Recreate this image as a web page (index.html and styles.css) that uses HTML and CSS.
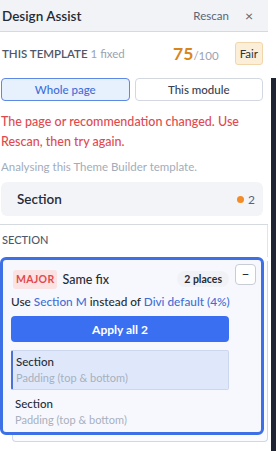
FILE: index.html
```html
<!DOCTYPE html>
<html>
<head>
<meta charset="utf-8">
<link rel="stylesheet" href="styles.css">
</head>
<body>
<div class="frame">
  <div class="panel">
    <header class="header">
      <span class="title">Design Assist</span>
      <span class="header-actions"><span class="rescan">Rescan</span><span class="close">×</span></span>
    </header>
    <div class="score-row">
      <span class="tpl"><span class="tpl-label">THIS TEMPLATE</span> <span class="tpl-fixed">1 fixed</span></span>
      <span class="score"><span class="score-num">75</span><span class="score-max">/100</span></span>
      <span class="fair">Fair</span>
    </div>
    <div class="tabs">
      <button class="tab active">Whole page</button>
      <button class="tab">This module</button>
    </div>
    <p class="error">The page or recommendation changed. Use Rescan, then try again.</p>
    <p class="note">Analysing this Theme Builder template.</p>
    <div class="section-card">
      <span class="section-name">Section</span>
      <span class="count"><span class="dot"></span>2</span>
    </div>
    <div class="group">
      <div class="group-label">SECTION</div>
      <div class="issue-wrap">
        <div class="issue">
          <div class="issue-head">
            <span class="major">MAJOR</span>
            <span class="fix">Same fix</span>
            <span class="places">2 places</span>
          </div>
          <button class="collapse">−</button>
          <p class="desc">Use <span class="link">Section M</span> instead of <span class="link">Divi default (4%)</span></p>
          <button class="apply">Apply all 2</button>
          <div class="item selected">
            <div class="item-name">Section</div>
            <div class="item-sub">Padding (top &amp; bottom)</div>
          </div>
          <div class="item">
            <div class="item-name">Section</div>
            <div class="item-sub">Padding (top &amp; bottom)</div>
          </div>
        </div>
      </div>
    </div>
  </div>
  <div class="scroll"></div>
</div>
</body>
</html>
```
FILE: styles.css
```css
* { box-sizing: border-box; }
html, body { margin: 0; padding: 0; background: #fff; }
body { font-family: "Lato", "Noto Sans", sans-serif; color: #2d3340; width: 278px; height: 451px; overflow: hidden; }
.frame { display: flex; height: 451px; }
.panel { width: 268px; flex: none; }
.scroll { width: 5px; margin-left: 3px; margin-top: 78px; background: #1f2432; }

.header { height: 32px; background: #f1f3f7; border-bottom: 1px solid #d5d9e0; display: flex; align-items: center; justify-content: space-between; padding: 0 0 0 2px; }
.title { font-size: 13.5px; font-weight: 600; color: #252b36; }
.header-actions { display: flex; align-items: center; }
.rescan { font-size: 11.5px; color: #5b6474; margin-right: 16px; }
.close { font-size: 14px; color: #5b6474; margin-right: 15px; }

.score-row { display: flex; align-items: center; height: 42px; padding: 0 5px 0 2px; }
.tpl { font-size: 11.5px; flex: 1; }
.tpl-label { font-weight: 600; color: #4f586a; }
.tpl-fixed { color: #9aa3b2; }
.score { margin-right: 16px; }
.score-num { font-size: 17.5px; font-weight: 700; color: #d8861c; }
.score-max { font-size: 11.5px; color: #9aa3b2; }
.fair { font-size: 11.5px; background: #fcefd9; border: 1px solid #f1d6ab; border-radius: 3px; padding: 4px 4px; color: #2d3340; }

.tabs { display: flex; gap: 5px; padding: 0 5px 0 1px; margin-top: 4px; }
.tab { flex: 1; height: 23px; font-family: inherit; font-size: 11.5px; font-weight: 500; border: 1px solid #d3d8e0; background: #fff; border-radius: 4px; color: #3a4150; }
.tab.active { background: #e7f0fd; border-color: #5d88e3; color: #3c6fd9; }

.error { margin: 11px 0 0 1px; font-size: 12.5px; font-weight: 500; line-height: 20px; color: #e04a4f; }
.note { margin: 8px 0 0 1px; font-size: 11.5px; color: #a3acba; }

.section-card { margin: 9px 5px 0 1px; height: 34px; background: #f3f4f7; border-radius: 6px; display: flex; align-items: center; justify-content: space-between; padding: 0 8px 0 16px; }
.section-name { font-size: 13.5px; font-weight: 600; color: #262c38; }
.count { display: flex; align-items: center; font-size: 12px; color: #5b6474; }
.dot { width: 7px; height: 7px; border-radius: 50%; background: #f38b26; margin-right: 4px; }

.group { margin-top: 8px; border-top: 1px solid #d5d9e0; }
.group-label { font-size: 11px; font-weight: 500; color: #4f586a; padding: 8px 0 0 2px; height: 32px; border-right: 1px solid #e1e4ea; }
.issue-wrap { position: relative; padding-right: 4px; }
.issue-wrap::before { content: ""; position: absolute; left: 12px; right: 0; top: 4px; bottom: -7px; border: 1px solid #cfd7ea; border-top: none; border-radius: 0 0 4px 4px; background: #fafbfe; }
.issue { position: relative; border: 3px solid #3d6fe6; border-radius: 6px; background: #f7f8fd; padding: 9px 32px 4px 8px; height: 178px; }
.issue-head { display: flex; align-items: center; height: 20px; }
.major { font-size: 10.5px; font-weight: 700; color: #e2494e; background: #fbe2e3; border-radius: 3px; padding: 3px 3px; letter-spacing: 0.3px; line-height: 13px; margin-left: 2px; }
.fix { font-size: 12.5px; font-weight: 500; margin-left: 5px; color: #262c38; flex: 1; }
.places { font-size: 10.5px; font-weight: 700; background: #f0f2f6; border-radius: 9px; padding: 2px 7px; color: #262c38; }
.collapse { position: absolute; right: 5px; top: 4px; width: 21px; height: 21px; padding: 0; border: 1px solid #c7ccd5; background: #fff; border-radius: 4px; font-size: 13px; line-height: 17px; color: #262c38; font-family: inherit; }
.desc { margin: 5px 0 0 0; font-size: 11.8px; font-weight: 500; color: #262c38; white-space: nowrap; }
.link { color: #3f6fd6; }
.apply { display: block; width: 100%; margin-top: 7px; height: 26px; border: none; border-radius: 4px; background: #3b6ff2; color: #fff; font-family: inherit; font-size: 12px; font-weight: 700; }
.item { padding: 3px 3px; height: 40px; }
.item.selected { margin-top: 8px; background: #dfe8fb; border: 1px solid #cbd6ef; border-left: 2px solid #4a72d9; border-radius: 2px; }
.item + .item { margin-top: 3px; padding-left: 4px; }
.item-name { font-size: 11.5px; font-weight: 500; color: #262c38; line-height: 16px; }
.item-sub { font-size: 11px; color: #a7b0be; line-height: 16px; }
```
